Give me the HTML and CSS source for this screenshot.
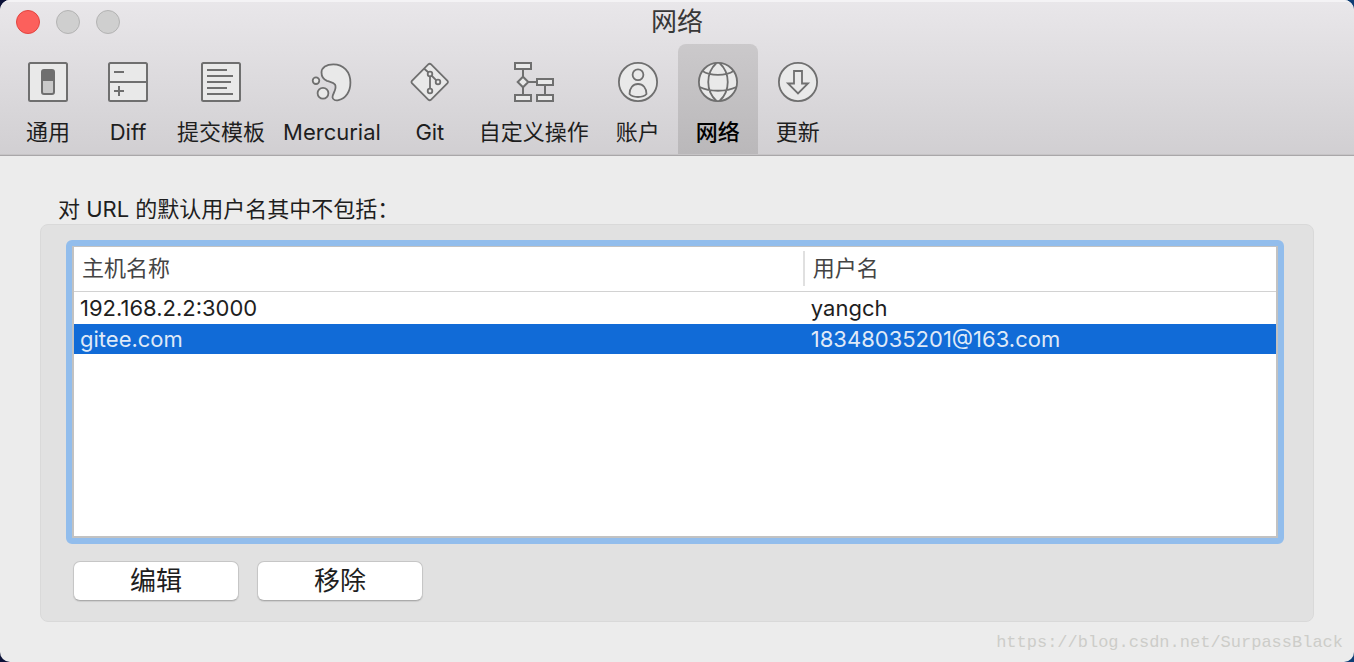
FILE: index.html
```html
<!DOCTYPE html>
<html lang="zh-CN">
<head>
<meta charset="utf-8">
<title>网络</title>
<link rel="stylesheet" href="styles.css">
</head>
<body>
<div class="window">
  <header class="titlebar">
    <div class="title-row">
      <div class="lights">
        <button class="light light-close" aria-label="关闭"></button>
        <button class="light" aria-label="最小化"></button>
        <button class="light" aria-label="缩放"></button>
      </div>
      <h1 class="title">网络</h1>
    </div>
    <nav class="tabs">
      <button class="tab">
        <svg class="icon" viewBox="0 0 40 40"><rect x="1" y="1" width="38" height="38" rx="1.5"/><rect x="14" y="8" width="12" height="24" rx="2" class="knob"/><path d="M14 19V10a2 2 0 0 1 2-2h8a2 2 0 0 1 2 2v9z" class="solid"/></svg>
        <span>通用</span>
      </button>
      <button class="tab">
        <svg class="icon" viewBox="0 0 40 40"><rect x="1" y="1" width="38" height="38" rx="1.5"/><path d="M1 20H39M6 10H16M6 29H16M11 24V34"/></svg>
        <span>Diff</span>
      </button>
      <button class="tab">
        <svg class="icon" viewBox="0 0 40 40"><rect x="1" y="1" width="38" height="38" rx="1.5"/><path d="M6 8H26M6 14H32M6 20H30M6 26H26M6 32H32"/></svg>
        <span>提交模板</span>
      </button>
      <button class="tab">
        <svg class="icon thin" viewBox="0 0 40 40"><circle cx="4" cy="18.7" r="3.3"/><circle cx="11" cy="31.3" r="5.4"/><path d="M21.3 2.3C14.500 2.300 9.500 5.700 9.500 10.500C9.500 14.500 11.500 17.400 15 18.800C18.500 20 21.500 20.300 23 22.500C25.500 27 20.300 31.500 20.500 35.300C20.700 38.200 23.800 38.700 26.500 38.100C34 36.300 38.400 29.500 38.400 20.500C38.400 9.500 31.500 2.300 21.300 2.300Z"/></svg>
        <span>Mercurial</span>
      </button>
      <button class="tab">
        <svg class="icon thin" viewBox="0 0 40 40"><path d="M18.500 2.200Q19.700 1.200 20.900 2.200L37.500 18.800Q38.500 20 37.500 21.200L20.900 37.800Q19.700 38.800 18.500 37.800L1.900 21.200Q0.900 20 1.900 18.800Z"/><path d="M14 6.500L18.500 10.500M21.500 13.500L26.300 18.300M20 14.300V26.700"/><circle cx="20" cy="12" r="2.3"/><circle cx="28" cy="20" r="2.3"/><circle cx="20" cy="29" r="2.3"/></svg>
        <span>Git</span>
      </button>
      <button class="tab">
        <svg class="icon" viewBox="0 0 40 40"><path d="M9 7V33M14 20H24M31 23V33"/><rect x="1" y="1" width="16" height="6"/><rect x="23" y="17" width="16" height="6"/><rect x="1" y="33" width="16" height="6"/><rect x="23" y="33" width="16" height="6"/><path d="M9 14.700L14.300 20L9 25.300L3.700 20Z"/></svg>
        <span>自定义操作</span>
      </button>
      <button class="tab">
        <svg class="icon thin" viewBox="0 0 40 40"><circle cx="20" cy="20" r="19.100"/><circle cx="20" cy="12.700" r="5.400"/><path d="M11.500 32C11.500 26 15 22 20 22S28.500 26 28.500 32C25 36 15 36 11.500 32Z"/></svg>
        <span>账户</span>
      </button>
      <button class="tab tab-active" aria-current="page">
        <svg class="icon thin" viewBox="0 0 40 40"><circle cx="20" cy="20" r="19.100"/><path d="M18.500 1C7.500 11 7.500 29 18.500 39M21.500 1C32.500 11 32.500 29 21.500 39M4.500 9C12 14.200 28 14.200 35.500 9M1.500 25C12 30 28 30 38.500 25" class="line"/></svg>
        <span>网络</span>
      </button>
      <button class="tab">
        <svg class="icon thin" viewBox="0 0 40 40"><circle cx="20" cy="20" r="19.100"/><path d="M16 9H24V21.500H30L20 31.500L10 21.500H16Z"/></svg>
        <span>更新</span>
      </button>
    </nav>
  </header>
  <main class="content">
    <h2 class="group-label" id="hosts-label">对 URL 的默认用户名其中不包括：</h2>
    <section class="group" aria-labelledby="hosts-label">
      <div class="list" tabindex="0">
        <table class="hosts">
          <thead>
            <tr><th class="host-col">主机名称</th><th>用户名</th></tr>
          </thead>
          <tbody>
            <tr><td>192.168.2.2:3000</td><td>yangch</td></tr>
            <tr class="selected"><td>gitee.com</td><td>18348035201@163.com</td></tr>
          </tbody>
        </table>
      </div>
      <div class="actions">
        <button class="action">编辑</button>
        <button class="action">移除</button>
      </div>
    </section>
  </main>
  <footer class="watermark">https://blog.csdn.net/SurpassBlack</footer>
</div>
</body>
</html>
```
FILE: styles.css
```css
* { box-sizing: border-box; }

body {
  margin: 0;
  background: linear-gradient(90deg, #0c1238 0, #0c1238 50%, #0d3d75 50%);
  font-family: Inter, "Noto Sans CJK SC", sans-serif;
  font-size: 22px;
  line-height: 30px;
  color: #1e1e1e;
}

button {
  margin: 0;
  padding: 0;
  border: 0;
  background: none;
  font: inherit;
  color: inherit;
}

.window {
  display: flex;
  flex-direction: column;
  min-height: 100vh;
  border-radius: 10px;
  background: #ececec;
  overflow: hidden;
}

.titlebar {
  background: linear-gradient(#e9e7ea, #d1cfd2);
  border-bottom: 1px solid #a9a7a9;
  box-shadow: inset 0 2px #f4f3f5, inset 0 -1px #c6c4c6;
}

.title-row {
  display: grid;
  grid-template-columns: 1fr auto 1fr;
  align-items: center;
  height: 44px;
  padding: 0 16px;
}

.lights { display: flex; gap: 16px; }

.light {
  width: 24px;
  height: 24px;
  border: 1px solid #b3b3b3;
  border-radius: 50%;
  background: #cfcfcf;
}

.light-close { background: #fc605c; border-color: #e2443f; }

.title {
  margin: 0;
  font-size: 26px;
  line-height: 32px;
  font-weight: 400;
  color: #383838;
}

.tabs { display: flex; padding: 0 8px 1px; }

.tab {
  display: flex;
  flex-direction: column;
  align-items: center;
  gap: 15px;
  min-width: 80px;
  height: 110px;
  padding: 18px 9px 0;
  white-space: nowrap;
}

.tab-active {
  border-radius: 8px 8px 0 0;
  background: linear-gradient(#cbc9cb, #bab8ba);
  color: #000;
  font-weight: 500;
}

.icon {
  display: block;
  width: 40px;
  height: 40px;
  overflow: visible;
  fill: #e9e9e9;
  stroke: #6f6f6f;
  stroke-width: 2;
}

.thin { stroke-width: 1.8; }
.icon .line { fill: none; }
.icon .knob { fill: #c9c9c9; }
.icon .solid { fill: #6f6f6f; stroke: none; }

.content {
  display: flex;
  flex: 1;
  flex-direction: column;
  padding: 39px 40px 0;
}

.group-label {
  margin: 0 18px;
  font-size: 22px;
  line-height: 29px;
  font-weight: 400;
}

.group {
  display: flex;
  flex: 1;
  flex-direction: column;
  gap: 17px;
  padding: 15px 29px 20px 25px;
  border: 1px solid #d9d9d9;
  border-radius: 8px;
  background: #e1e1e1;
}

.list {
  flex: 1;
  border: 6px solid #92bdec;
  border-radius: 6px;
  background: #fff;
  box-shadow: inset 0 0 0 2px #c2c2c2;
  padding: 1px 2px 2px;
  outline: 0;
}

.hosts {
  width: 100%;
  border-collapse: separate;
  border-spacing: 0;
  table-layout: fixed;
  background: #fff;
}

.hosts th {
  height: 45px;
  padding: 0 8px 2px;
  border-bottom: 1px solid #d2d2d2;
  font-weight: 400;
  text-align: left;
  color: #444;
  background: linear-gradient(#e0e0e0, #e0e0e0) right 4px / 2px 35px no-repeat;
}

.hosts th:last-child { background: none; }
.hosts .host-col { width: 60.8%; }

.hosts td {
  height: 32px;
  padding: 0 6px;
}

.selected {
  background: #116bd7;
  color: #dfe9f8;
}

.hosts .selected td { height: 30px; padding-top: 1px; line-height: 29px; }

.actions {
  display: flex;
  gap: 18px;
  padding-left: 7px;
}

.action {
  width: 166px;
  height: 40px;
  border: 1px solid #c6c6c6;
  border-bottom-color: #ababab;
  border-radius: 7px;
  background: #fff;
  box-shadow: 0 1px 1px #cccccc;
  font-size: 26px;
}

.watermark {
  padding: 6px 11px 4px;
  font-family: "Liberation Mono", monospace;
  font-size: 17px;
  text-align: right;
  color: #cdcdc9;
}
```
